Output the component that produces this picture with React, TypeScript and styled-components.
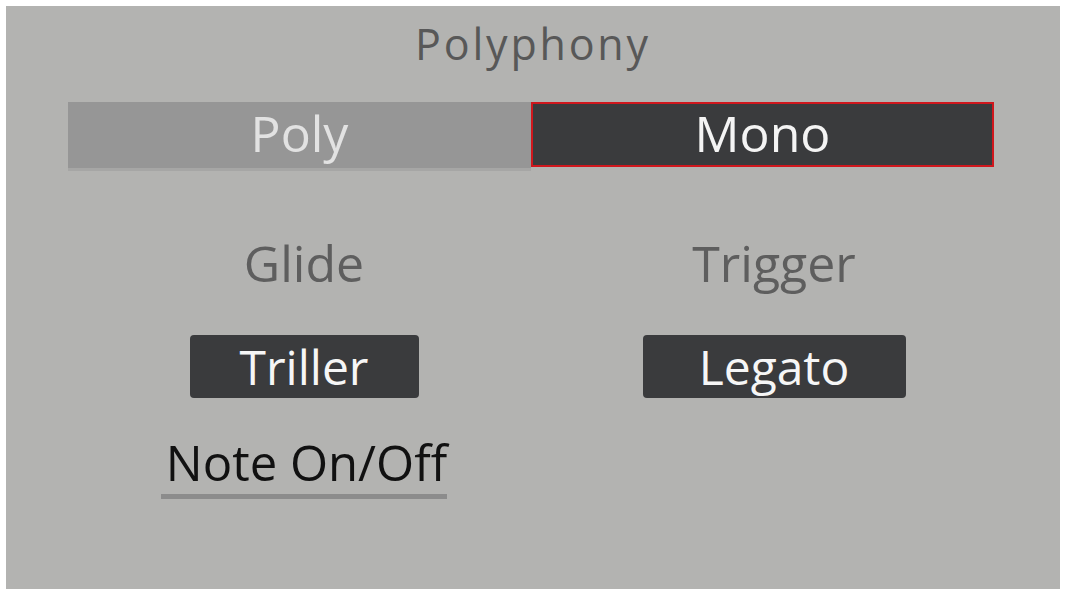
import React from "react";
import styled, { createGlobalStyle } from "styled-components";

const Global = createGlobalStyle`
  html, body { margin: 0; padding: 0; background: #ffffff; }
  body { font-family: "Open Sans", "Noto Sans", sans-serif; }
`;

const Panel = styled.div`
  margin: 6px;
  width: 1054px;
  height: 583px;
  box-sizing: border-box;
  background: #b3b3b1;
  display: flex;
  flex-direction: column;
  align-items: center;
  padding-top: 18px;
`;

const Title = styled.div`
  font-size: 43px;
  line-height: 40px;
  color: #585858;
  letter-spacing: 2.8px;
`;

const Segmented = styled.div`
  margin-top: 38px;
  width: 926px;
  margin-left: -4px;
  display: grid;
  grid-template-columns: 1fr 1fr;
  height: 66px;
`;

const Segment = styled.div<{ $active?: boolean }>`
  display: flex;
  align-items: center;
  justify-content: center;
  box-sizing: border-box;
  font-size: 50px;
  line-height: 62px;
  padding-bottom: 4px;
  background: ${(p) => (p.$active ? "#3a3b3d" : "#969696")};
  color: ${(p) => (p.$active ? "#f4f4f4" : "#e2e2e2")};
  border: ${(p) => (p.$active ? "2px solid #d0171d" : "none")};
  height: ${(p) => (p.$active ? "65px" : "66px")};
  box-shadow: ${(p) => (p.$active ? "none" : "0 3px 0 #a6a6a5")};
`;

const Columns = styled.div`
  margin-top: 65px;
  align-self: flex-start;
  margin-left: 63px;
  display: grid;
  grid-template-columns: 470px 470px;
`;

const Column = styled.div`
  display: flex;
  flex-direction: column;
  align-items: center;
`;

const Label = styled.div`
  font-size: 50px;
  line-height: 60px;
  color: #5e5e5e;
`;

const ValueButton = styled.div<{ $width: number }>`
  margin-top: 42px;
  width: ${(p) => p.$width}px;
  height: 63px;
  border-radius: 4px;
  background: #3a3b3d;
  color: #f6f6f6;
  font-size: 48px;
  line-height: 63px;
  text-align: center;
  padding-bottom: 2px;
  box-sizing: border-box;
`;

const NoteLink = styled.div`
  margin-top: 36px;
  font-size: 49px;
  line-height: 56px;
  color: #111111;
  padding: 0 0 4px 5px;
  border-bottom: 5px solid #8c8c8c;
`;

export default function App() {
  return (
    <>
      <Global />
      <Panel>
        <Title>Polyphony</Title>
        <Segmented>
          <Segment>Poly</Segment>
          <Segment $active>Mono</Segment>
        </Segmented>
        <Columns>
          <Column>
            <Label>Glide</Label>
            <ValueButton $width={229}>Triller</ValueButton>
            <NoteLink>Note On/Off</NoteLink>
          </Column>
          <Column>
            <Label>Trigger</Label>
            <ValueButton $width={263}>Legato</ValueButton>
          </Column>
        </Columns>
      </Panel>
    </>
  );
}
